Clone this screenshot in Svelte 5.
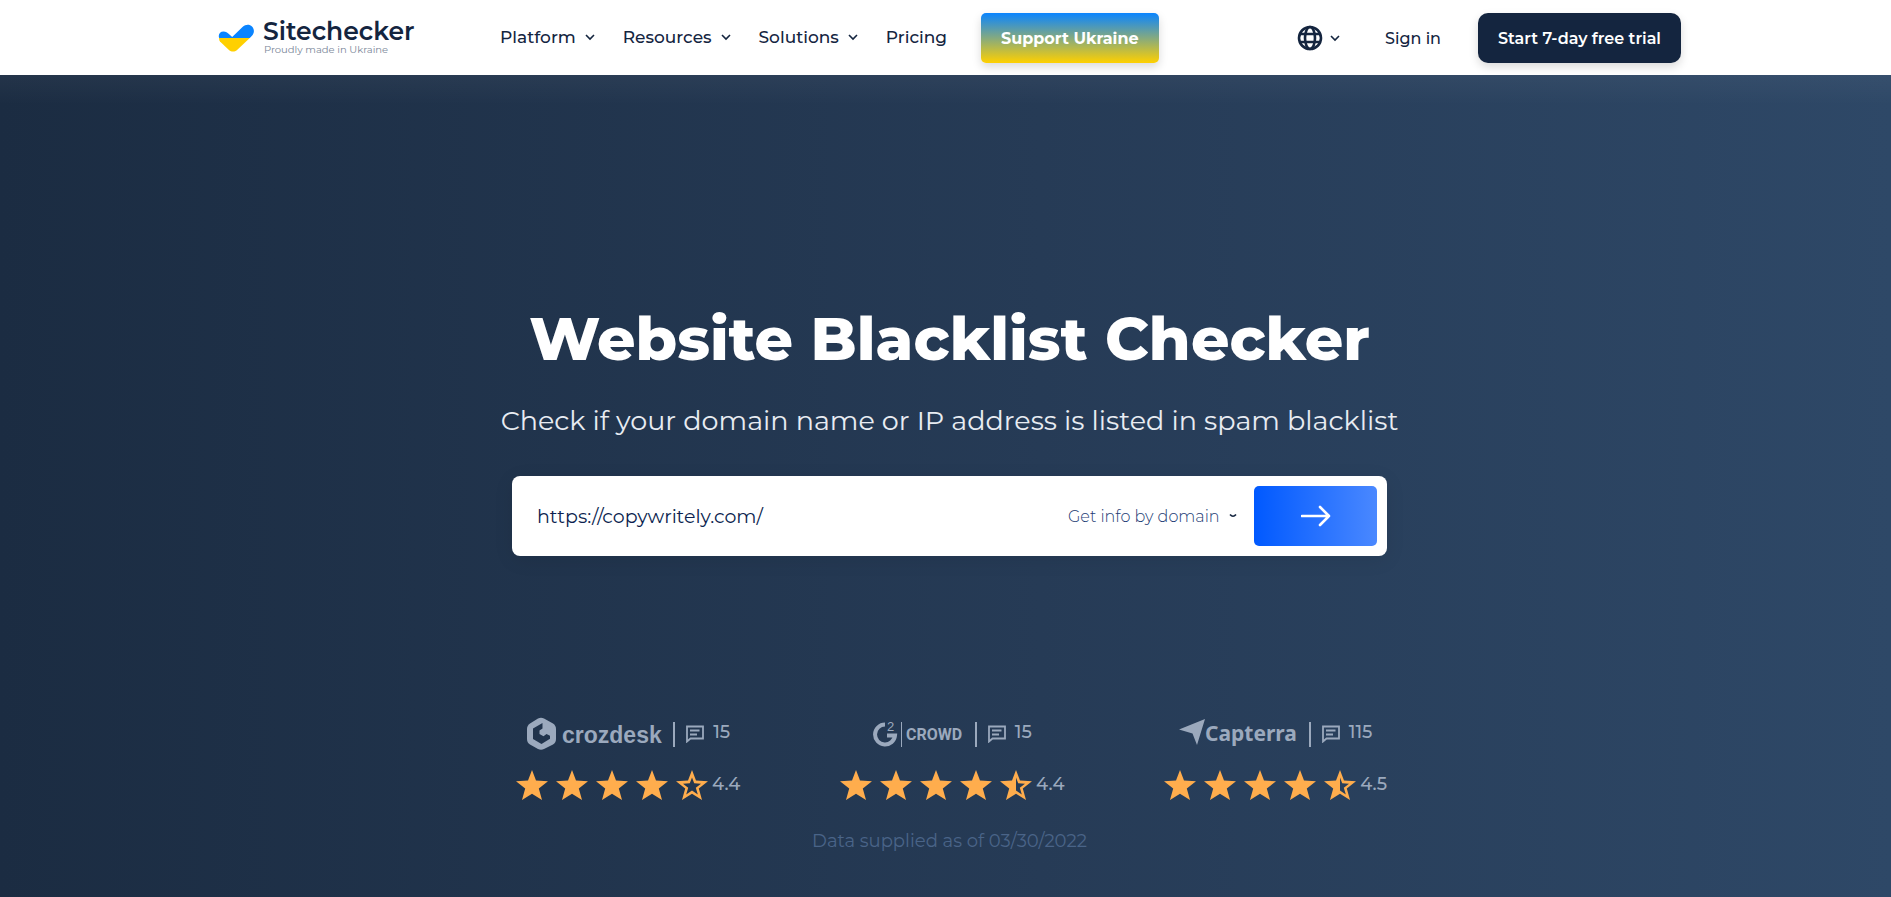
<script>
let menu = [
	{ title: "Platform", sub: true },
	{ title: "Resources", sub: true },
	{ title: "Solutions", sub: true },
	{ title: "Pricing", sub: false }
]

let modes = ["Get info by domain", "Get info by page"]

let ratings = [
	{ brand: "crozdesk", reviews: 15, score: "4.4", last: "empty" },
	{ brand: "g2crowd", reviews: 15, score: "4.4", last: "half" },
	{ brand: "capterra", reviews: 115, score: "4.5", last: "half" }
]

let url = $state("https://copywritely.com/")
let mode = $state(modes[0])

const star = "M16 0L20 10.5L32 11.3L22.8 18.5L26 30L16 23.8L6 30L9.2 18.5L0 11.3L12 10.5Z"
const hole = "M16 7.5L18.2 13.2L25 13.8L19.8 17.8L21.8 24.6L16 20.6L10.2 24.6L12.2 17.8L7 13.8L13.8 13.2Z"
const halfHole = "M16 7.5L18.2 13.2L25 13.8L19.8 17.8L21.8 24.6L16 20.6Z"
const shapes = { full: star, empty: star + hole, half: star + halfHole }

function submit(e) {
	e.preventDefault()
}
</script>

{#snippet chevron()}
	<svg class="chevron" width="10" height="8" viewBox="0 0 10 8"><path d="M1 2l4 4 4-4" /></svg>
{/snippet}

<div class="page">
	<header>
		<div class="bar">
			<a class="logo" href="/">
				<svg width="36" height="28" viewBox="0 0 36 28">
					<path fill="#0a84ff" d="M1.200 14C-.2 10.500 2 7.500 5.500 7.500C8 7.500 9.400 8.600 10.600 9.800L14.200 13L24.500 3C27.500 .200 31.500 0 34 2.500C36.500 5 36.500 9 34.200 11.500L31.800 14Z" />
					<path fill="#ffd000" d="M1 14H31.800L18.800 26.300C17 28 13 28 11.200 26.300L2.500 18C1.500 17 1 15.500 1 14Z" />
				</svg>
				<span class="names">
					<span class="name">Sitechecker</span>
					<span class="tagline">Proudly made in Ukraine</span>
				</span>
			</a>
			<nav>
				{#each menu as item}
					{#if item.sub}
						<button class="item" type="button">{item.title}{@render chevron()}</button>
					{:else}
						<a class="item" href="/pricing">{item.title}</a>
					{/if}
				{/each}
			</nav>
			<a class="btn support" href="/support-ukraine">Support Ukraine</a>
			<div class="account">
				<button class="lang" type="button" aria-label="Language">
					<svg class="globe" width="26" height="26" viewBox="0 0 26 26">
						<circle cx="13" cy="13" r="11" />
						<ellipse cx="13" cy="13" rx="5" ry="11" />
						<path d="M2.500 9H23.500M2.500 17H23.500" />
					</svg>
					{@render chevron()}
				</button>
				<a class="signin" href="/login">Sign in</a>
				<a class="btn trial" href="/trial">Start 7-day free trial</a>
			</div>
		</div>
	</header>

	<main>
		<h1>Website Blacklist Checker</h1>
		<p class="lead">Check if your domain name or IP address is listed in spam blacklist</p>

		<form onsubmit={submit}>
			<input type="text" aria-label="Website address" bind:value={url} />
			<div class="mode">
				<select aria-label="Check mode" bind:value={mode}>
					{#each modes as m}
						<option>{m}</option>
					{/each}
				</select>
				<svg class="tick" width="8" height="6" viewBox="0 0 8 6"><path d="M1 1.500Q4 5 7 1.500" /></svg>
			</div>
			<button class="go" type="submit" aria-label="Check">
				<svg width="30" height="22" viewBox="0 0 30 22"><path d="M1 11H28M19 2l9 9-9 9" /></svg>
			</button>
		</form>

		<div class="ratings">
			{#each ratings as r}
				<div class="rating">
					<div class="brand">
						{#if r.brand == "crozdesk"}
							<svg width="137" height="34" viewBox="0 0 137 34">
								<path fill-rule="evenodd" d="M12 1.500Q15 0 18 1.500L27 6.500Q30 8.500 30 12V22Q30 25.500 27 27.500L18 32Q15 33.500 12 32L4 27.500Q1 25.500 1 22V12Q1 8.500 4 6.500ZM16.500 6L7 11.500V22L15.500 27L24 21.800V18.800L20.500 17L17.500 19.200L13.500 17V13.500L16.500 11.500Z" />
								<text class="croz" x="36" y="26">crozdesk</text>
							</svg>
						{:else if r.brand == "g2crowd"}
							<svg width="92" height="34" viewBox="0 0 92 34">
								<path class="gee" d="M12 7.500A10 10 0 1 0 22 18.500H14" />
								<text class="two" x="14" y="14">2</text>
								<path d="M28 5h1v25h-1z" />
								<text class="crowd" x="33" y="23">CROWD</text>
							</svg>
						{:else}
							<svg width="120" height="34" viewBox="0 0 120 34">
								<path d="M0 12.500L26 2L18 28L13.500 16.500Z" />
								<text class="cap" x="26" y="24">Capterra</text>
							</svg>
						{/if}
						<span class="split"></span>
						<svg class="comment" width="18" height="18" viewBox="0 0 18 18">
							<path d="M1 1.500H17V13.500H4.500L1 16.500ZM4 5.500H13.500M4 9.500H11" />
						</svg>
						<span class="count">{r.reviews}</span>
					</div>
					<div class="stars">
						{#each ["full", "full", "full", "full", r.last] as kind}
							<svg width="32" height="30" viewBox="0 0 32 30"><path fill-rule="evenodd" d={shapes[kind]} /></svg>
						{/each}
						<span>{r.score}</span>
					</div>
				</div>
			{/each}
		</div>

		<p class="date">Data supplied as of 03/30/2022</p>
	</main>
</div>

<style>
	:global(body) {
		margin: 0;
	}

	.page {
		min-height: 100vh;
		display: flex;
		flex-direction: column;
		font-family: Montserrat, Inter, sans-serif;
		color: #14253f;
	}

	header {
		background: #fff;
		padding-left: 8px;
	}

	.bar {
		max-width: 1463px;
		height: 75px;
		margin: 0 auto;
		display: flex;
		align-items: center;
	}

	a {
		color: inherit;
		text-decoration: none;
	}

	button {
		font: inherit;
		color: inherit;
		background: none;
		border: 0;
		padding: 0;
		cursor: pointer;
	}

	.logo {
		display: flex;
		align-items: center;
		gap: 9px;
		width: 282px;
	}

	.names {
		display: flex;
		flex-direction: column;
		padding-bottom: 2px;
	}

	.name {
		font-size: 25px;
		line-height: 26px;
		font-weight: 600;
	}

	.tagline {
		padding-left: 1px;
		font-size: 10px;
		line-height: 12px;
		color: #7b8799;
	}

	nav {
		display: flex;
		gap: 28px;
		padding-bottom: 2px;
	}

	.item {
		display: flex;
		align-items: center;
		gap: 9px;
		font-size: 17px;
		line-height: 24px;
		font-weight: 500;
	}

	.chevron {
		fill: none;
		stroke: #14253f;
		stroke-width: 1.6;
	}

	.btn {
		display: block;
		box-sizing: border-box;
		height: 50px;
		padding: 0 20px;
		font-size: 16px;
		line-height: 52px;
		font-weight: 700;
		color: #fff;
		white-space: nowrap;
		box-shadow: 0 4px 10px rgba(0, 0, 0, 0.15);
	}

	.support {
		margin-left: 34px;
		border-radius: 5px;
		background: linear-gradient(#0a84ff, #ffd000);
	}

	.account {
		margin-left: auto;
		display: flex;
		align-items: center;
	}

	.lang {
		display: flex;
		align-items: center;
		gap: 7px;
	}

	.globe {
		fill: none;
		stroke: #14253f;
		stroke-width: 2.6;
	}

	.signin {
		margin: 0 37px 0 45px;
		font-size: 16px;
		line-height: 52px;
		height: 50px;
		font-weight: 500;
	}

	.trial {
		border-radius: 10px;
		font-weight: 600;
		background: #14253f;
	}

	main {
		flex: 1;
		display: flex;
		flex-direction: column;
		align-items: center;
		padding: 228px 0 40px 8px;
		background:
			linear-gradient(rgba(255, 255, 255, 0.04), rgba(255, 255, 255, 0) 30px),
			linear-gradient(90deg, #1b2c42, #263b56 55%, #2e4867);
	}

	h1 {
		margin: 0;
		font-size: 60px;
		line-height: 72px;
		font-weight: 800;
		color: #fff;
	}

	.lead {
		margin: 26px 0 35px;
		font-size: 27px;
		line-height: 40px;
		color: #e8ecf2;
	}

	form {
		box-sizing: border-box;
		width: 100%;
		max-width: 875px;
		height: 80px;
		padding: 10px 10px 10px 25px;
		display: flex;
		align-items: center;
		border-radius: 8px;
		background: #fff;
		box-shadow: 0 4px 20px rgba(0, 0, 0, 0.08);
	}

	input {
		flex: 1;
		min-width: 0;
		height: 60px;
		padding: 0;
		border: 0;
		outline: 0;
		font: inherit;
		font-size: 19px;
		color: #0c1f50;
	}

	.mode {
		position: relative;
		display: flex;
		align-items: center;
		margin-right: 17px;
	}

	select {
		appearance: none;
		padding: 0 17px 0 0;
		border: 0;
		background: none;
		font: inherit;
		font-size: 16px;
		font-weight: 300;
		color: #1c3c74;
	}

	.tick {
		position: absolute;
		right: 0;
		fill: none;
		stroke: #14253f;
		stroke-width: 1.6;
		pointer-events: none;
	}

	.go {
		width: 123px;
		height: 60px;
		border-radius: 5px;
		background: linear-gradient(90deg, #0059ff, #4a88ff);
	}

	.go svg {
		display: block;
		margin: 0 auto;
		fill: none;
		stroke: #fff;
		stroke-width: 2.6;
		stroke-linecap: round;
		stroke-linejoin: round;
	}

	.ratings {
		box-sizing: border-box;
		width: 100%;
		max-width: 875px;
		margin-top: 160px;
		padding-left: 4px;
		display: flex;
		justify-content: space-between;
		color: #9ba9bd;
		font-size: 18px;
		font-weight: 500;
	}

	.rating {
		display: flex;
		flex-direction: column;
		align-items: center;
		gap: 18px;
	}

	.brand {
		display: flex;
		align-items: center;
		height: 36px;
		fill: #9ba9bd;
	}

	.split {
		width: 2px;
		height: 25px;
		margin: 0 11px 0 10px;
		background: #9ba9bd;
	}

	.comment {
		margin-right: 9px;
		fill: none;
		stroke: #9ba9bd;
		stroke-width: 1.8;
	}

	.count {
		padding-bottom: 4px;
	}

	.croz {
		font: bold 23px "Liberation Sans", sans-serif;
	}

	.gee {
		fill: none;
		stroke: #9ba9bd;
		stroke-width: 4;
	}

	.two {
		font: 13px "Liberation Sans", sans-serif;
	}

	.crowd {
		font: bold 16px Roboto, sans-serif;
	}

	.cap {
		font: bold 21px "Noto Sans", sans-serif;
	}

	.stars {
		display: flex;
		align-items: center;
		gap: 8px;
		fill: #ffad4d;
	}

	.stars span {
		margin-left: -4px;
		padding-bottom: 2px;
	}

	.date {
		margin: 27px 0 0;
		font-size: 18px;
		line-height: 28px;
		color: #4a6488;
	}
</style>
